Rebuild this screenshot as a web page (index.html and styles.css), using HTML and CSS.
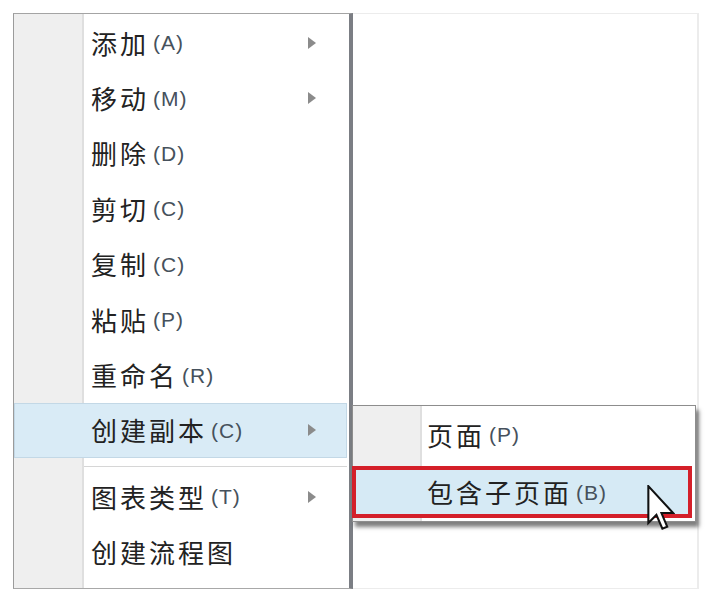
FILE: index.html
```html
<html>
    <head>
        <title>Context Menu</title>
        <link rel="stylesheet" href="styles.css">
    </head>
    <body>
        <div class="window">
            <div class="menu">
                <div class="menu-item"><span class="zh">添加</span><span class="key">(A)</span><span class="arrow"></span></div>
                <div class="menu-item"><span class="zh">移动</span><span class="key">(M)</span><span class="arrow"></span></div>
                <div class="menu-item"><span class="zh">删除</span><span class="key">(D)</span></div>
                <div class="menu-item"><span class="zh">剪切</span><span class="key">(C)</span></div>
                <div class="menu-item"><span class="zh">复制</span><span class="key">(C)</span></div>
                <div class="menu-item"><span class="zh">粘贴</span><span class="key">(P)</span></div>
                <div class="menu-item"><span class="zh">重命名</span><span class="key">(R)</span></div>
                <div class="menu-item active"><span class="zh">创建副本</span><span class="key">(C)</span><span class="arrow"></span></div>
                <div class="menu-sep"></div>
                <div class="menu-item"><span class="zh">图表类型</span><span class="key">(T)</span><span class="arrow"></span></div>
                <div class="menu-item"><span class="zh">创建流程图</span></div>
            </div>

            <!-- submenu of 创建副本 -->
            <div class="submenu">
                <div class="sub-item"><span class="zh">页面</span><span class="key">(P)</span></div>
                <div class="sub-item marked"><span class="zh">包含子页面</span><span class="key">(B)</span></div>
            </div>

            <svg class="cursor" width="28" height="46" viewBox="0 0 12 20">
                <path d="M0.5 0.5 V16.5 L4 13 L6.6 19 L8.7 18.1 L6.2 12.2 H11.3 Z" fill="#fff" stroke="#111" stroke-width="0.9" stroke-linejoin="miter"/>
            </svg>
        </div>
    </body>
</html>
```

FILE: styles.css
```css
body {
    margin: 0;
    background: white;
    font-family: "Noto Sans CJK SC", sans-serif;
}

.window {
    position: relative;
    box-sizing: border-box;
    margin: 13px 0 0 13px;
    width: 686px;
    height: 576px;
    border: 1px solid #ececec;
    border-right: 2px solid #ececec;
    display: flex;
}

.menu {
    box-sizing: border-box;
    width: 340px;
    height: 576px;
    margin: -1px 0 -1px -1px;
    padding-top: 1px;
    border-left: 1px solid #9b9b9b;
    border-top: 1px solid #a4a4a4;
    border-bottom: 1px solid #a8a8a8;
    border-right: 4px solid #7b7e84;
    background: linear-gradient(to right, #efefef 0 68px, #dfdfdf 68px 70px, white 70px);
    display: flex;
    flex-direction: column;
}

.menu-item {
    display: flex;
    align-items: center;
    box-sizing: border-box;
    height: 55.4px;
    padding-left: 77px;
    padding-right: 31px;
    margin-right: 2px;
}

.menu-item.active {
    background: #d9ebf6;
    box-shadow: inset 0 0 0 1px #c3d8e6;
}

.menu-sep {
    height: 1px;
    margin: 8px 2px 2px 70px;
    background: #d6d6d6;
}

.zh {
    font-family: "Noto Sans CJK SC", sans-serif;
    font-size: 26px;
    letter-spacing: 3px;
    line-height: 1;
    color: #222;
}

.key {
    font-family: "Liberation Sans", sans-serif;
    font-size: 21px;
    letter-spacing: 1px;
    line-height: 1;
    color: #46515c;
    margin-left: 4px;
}

.arrow {
    margin-left: auto;
    width: 0;
    height: 0;
    border-left: 8px solid #8b8b8b;
    border-top: 6px solid transparent;
    border-bottom: 6px solid transparent;
}

.submenu {
    position: absolute;
    left: 338px;
    top: 391px;
    box-sizing: border-box;
    width: 344px;
    height: 117px;
    padding-top: 1px;
    border: 1px solid #8d8d8d;
    background: linear-gradient(to right, #efefef 0 67px, #dfdfdf 67px 69px, white 69px);
    box-shadow: 3px 5px 4px rgba(0, 0, 0, 0.5);
}

.sub-item {
    display: flex;
    align-items: center;
    box-sizing: border-box;
    height: 55px;
    padding-left: 74px;
}

.sub-item.marked {
    height: 52px;
    margin: 4px 3px 0 -1px;
    padding-left: 71px;
    border: 4px solid #d41f29;
    background: #d6eaf5;
}

.cursor {
    position: absolute;
    left: 633px;
    top: 471px;
}
```
